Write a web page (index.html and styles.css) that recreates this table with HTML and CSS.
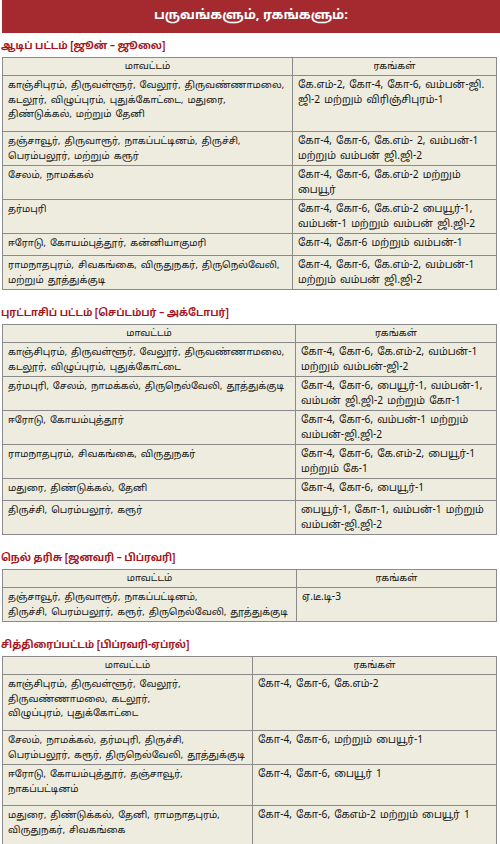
FILE: index.html
```html
<!DOCTYPE html>
<html lang="ta">
<head>
<meta charset="utf-8">
<link rel="stylesheet" href="styles.css">
</head>
<body>
<div class="page">
  <div class="banner">பருவங்களும், ரகங்களும்:</div>

  <h2 class="sec sec-first">ஆடிப் பட்டம் [ஜூன் – ஜூலை]</h2>
  <table class="tbl t1">
    <colgroup><col class="c1"><col></colgroup>
    <tr class="hd"><td>மாவட்டம்</td><td>ரகங்கள்</td></tr>
    <tr class="tall"><td>காஞ்சிபுரம், திருவள்ளூர், வேலூர், திருவண்ணாமலை,<br>கடலூர், விழுப்புரம், புதுக்கோட்டை, மதுரை,<br>திண்டுக்கல், மற்றும் தேனி</td><td>கே.எம்-2, கோ-4, கோ-6, வம்பன்-ஜி.<br>ஜி-2 மற்றும் விரிஞ்சிபுரம்-1</td></tr>
    <tr><td>தஞ்சாவூர், திருவாரூர், நாகப்பட்டினம், திருச்சி,<br>பெரம்பலூர், மற்றும் கரூர்</td><td>கோ-4, கோ-6, கே.எம்- 2, வம்பன்-1<br>மற்றும் வம்பன் ஜி.ஜி-2</td></tr>
    <tr><td>சேலம், நாமக்கல்</td><td>கோ-4, கோ-6, கே.எம்-2 மற்றும்<br>பையூர்</td></tr>
    <tr><td>தர்மபுரி</td><td>கோ-4, கோ-6, கே.எம்-2 பையூர்-1,<br>வம்பன்-1 மற்றும் வம்பன் ஜி.ஜி-2</td></tr>
    <tr class="one"><td>ஈரோடு, கோயம்புத்தூர், கன்னியாகுமரி</td><td>கோ-4, கோ-6 மற்றும் வம்பன்-1</td></tr>
    <tr><td>ராமநாதபுரம், சிவகங்கை, விருதுநகர், திருநெல்வேலி,<br>மற்றும் தூத்துக்குடி</td><td>கோ-4, கோ-6, கே.எம்-2, வம்பன்-1<br>மற்றும் வம்பன் ஜி.ஜி-2</td></tr>
  </table>

  <h2 class="sec">புரட்டாசிப் பட்டம் [செப்டம்பர் – அக்டோபர்]</h2>
  <table class="tbl t2">
    <colgroup><col class="c2"><col></colgroup>
    <tr class="hd"><td>மாவட்டம்</td><td>ரகங்கள்</td></tr>
    <tr><td>காஞ்சிபுரம், திருவள்ளூர், வேலூர், திருவண்ணாமலை,<br>கடலூர், விழுப்புரம், புதுக்கோட்டை</td><td>கோ-4, கோ-6, கே.எம்-2, வம்பன்-1<br>மற்றும் வம்பன்-ஜி-2</td></tr>
    <tr><td>தர்மபுரி, சேலம், நாமக்கல், திருநெல்வேலி, தூத்துக்குடி</td><td>கோ-4, கோ-6, பையூர்-1, வம்பன்-1,<br>வம்பன் ஜி.ஜி-2 மற்றும் கோ-1</td></tr>
    <tr><td>ஈரோடு, கோயம்புத்தூர்</td><td>கோ-4, கோ-6, வம்பன்-1 மற்றும்<br>வம்பன்-ஜி.ஜி-2</td></tr>
    <tr><td>ராமநாதபுரம், சிவகங்கை, விருதுநகர்</td><td>கோ-4, கோ-6, கே.எம்-2, பையூர்-1<br>மற்றும் கே-1</td></tr>
    <tr class="one"><td>மதுரை, திண்டுக்கல், தேனி</td><td>கோ-4, கோ-6, பையூர்-1</td></tr>
    <tr><td>திருச்சி, பெரம்பலூர், கரூர்</td><td>பையூர்-1, கோ-1, வம்பன்-1 மற்றும்<br>வம்பன்-ஜி.ஜி-2</td></tr>
  </table>

  <h2 class="sec">நெல் தரிசு [ஜனவரி – பிப்ரவரி]</h2>
  <table class="tbl t3">
    <colgroup><col class="c3"><col></colgroup>
    <tr class="hd"><td>மாவட்டம்</td><td>ரகங்கள்</td></tr>
    <tr><td>தஞ்சாவூர், திருவாரூர், நாகப்பட்டினம்,<br>திருச்சி, பெரம்பலூர், கரூர், திருநெல்வேலி, தூத்துக்குடி</td><td>ஏ.டீ.டி-3</td></tr>
  </table>

  <h2 class="sec">சித்திரைப்பட்டம் [பிப்ரவரி-ஏப்ரல்]</h2>
  <table class="tbl t4">
    <colgroup><col class="c4"><col></colgroup>
    <tr class="hd"><td>மாவட்டம்</td><td>ரகங்கள்</td></tr>
    <tr class="tall"><td>காஞ்சிபுரம், திருவள்ளூர், வேலூர்,<br>திருவண்ணாமலை, கடலூர்,<br>விழுப்புரம், புதுக்கோட்டை</td><td>கோ-4, கோ-6, கே.எம்-2</td></tr>
    <tr><td>சேலம், நாமக்கல், தர்மபுரி, திருச்சி,<br>பெரம்பலூர், கரூர், திருநெல்வேலி, தூத்துக்குடி</td><td>கோ-4, கோ-6, மற்றும் பையூர்-1</td></tr>
    <tr class="r3"><td>ஈரோடு, கோயம்புத்தூர், தஞ்சாவூர்,<br>நாகப்பட்டினம்</td><td class="ind">கோ-4, கோ-6, பையூர் 1</td></tr>
    <tr class="last"><td>மதுரை, திண்டுக்கல், தேனி, ராமநாதபுரம்,<br>விருதுநகர், சிவகங்கை</td><td>கோ-4, கோ-6, கேஎம்-2 மற்றும் பையூர் 1</td></tr>
  </table>
</div>
</body>
</html>
```

FILE: styles.css
```css
html, body {
  margin: 0;
  padding: 0;
  background: #ffffff;
}
.page {
  width: 500px;
  font-family: "Noto Sans Tamil", "Lohit Tamil", "Noto Sans", "DejaVu Sans", sans-serif;
  color: #141414;
}
.banner {
  margin-left: 2px;
  height: 33px;
  background: #a52a30;
  color: #ffffff;
  font-weight: bold;
  font-size: 13px;
  line-height: 33px;
  text-align: center;
}
.sec {
  margin: 13px 0 0 1px;
  height: 21px;
  line-height: 21px;
  font-size: 10px;
  font-weight: bold;
  color: #a3161d;
  white-space: nowrap;
}
.sec-first {
  margin-top: 3px;
}
.tbl {
  margin-left: 2px;
  width: 495px;
  border-collapse: collapse;
  table-layout: fixed;
  background: #eeecdf;
  font-size: 10.2px;
  line-height: 14.5px;
  word-spacing: 1.5px;
}
.tbl td {
  border: 1px solid #8a8a8a;
  padding: 3px 5px 1px 5px;
  vertical-align: top;
  white-space: nowrap;
  overflow: hidden;
}
.tbl td:first-child {
  font-size: 9.6px;
}
.tbl .hd td {
  text-align: center;
  padding: 2px 5px 1px 5px;
  font-size: 9.6px;
  line-height: 14px;
}
.c1 { width: 290px; }
.c2 { width: 293px; }
.c3 { width: 294px; }
.c4 { width: 250px; }
.ind { padding-left: 8px; }
.tall td { height: 51px; }
.one td { height: 17px; }
.r3 td { height: 36px; }
.last td { height: 42px; }
```
